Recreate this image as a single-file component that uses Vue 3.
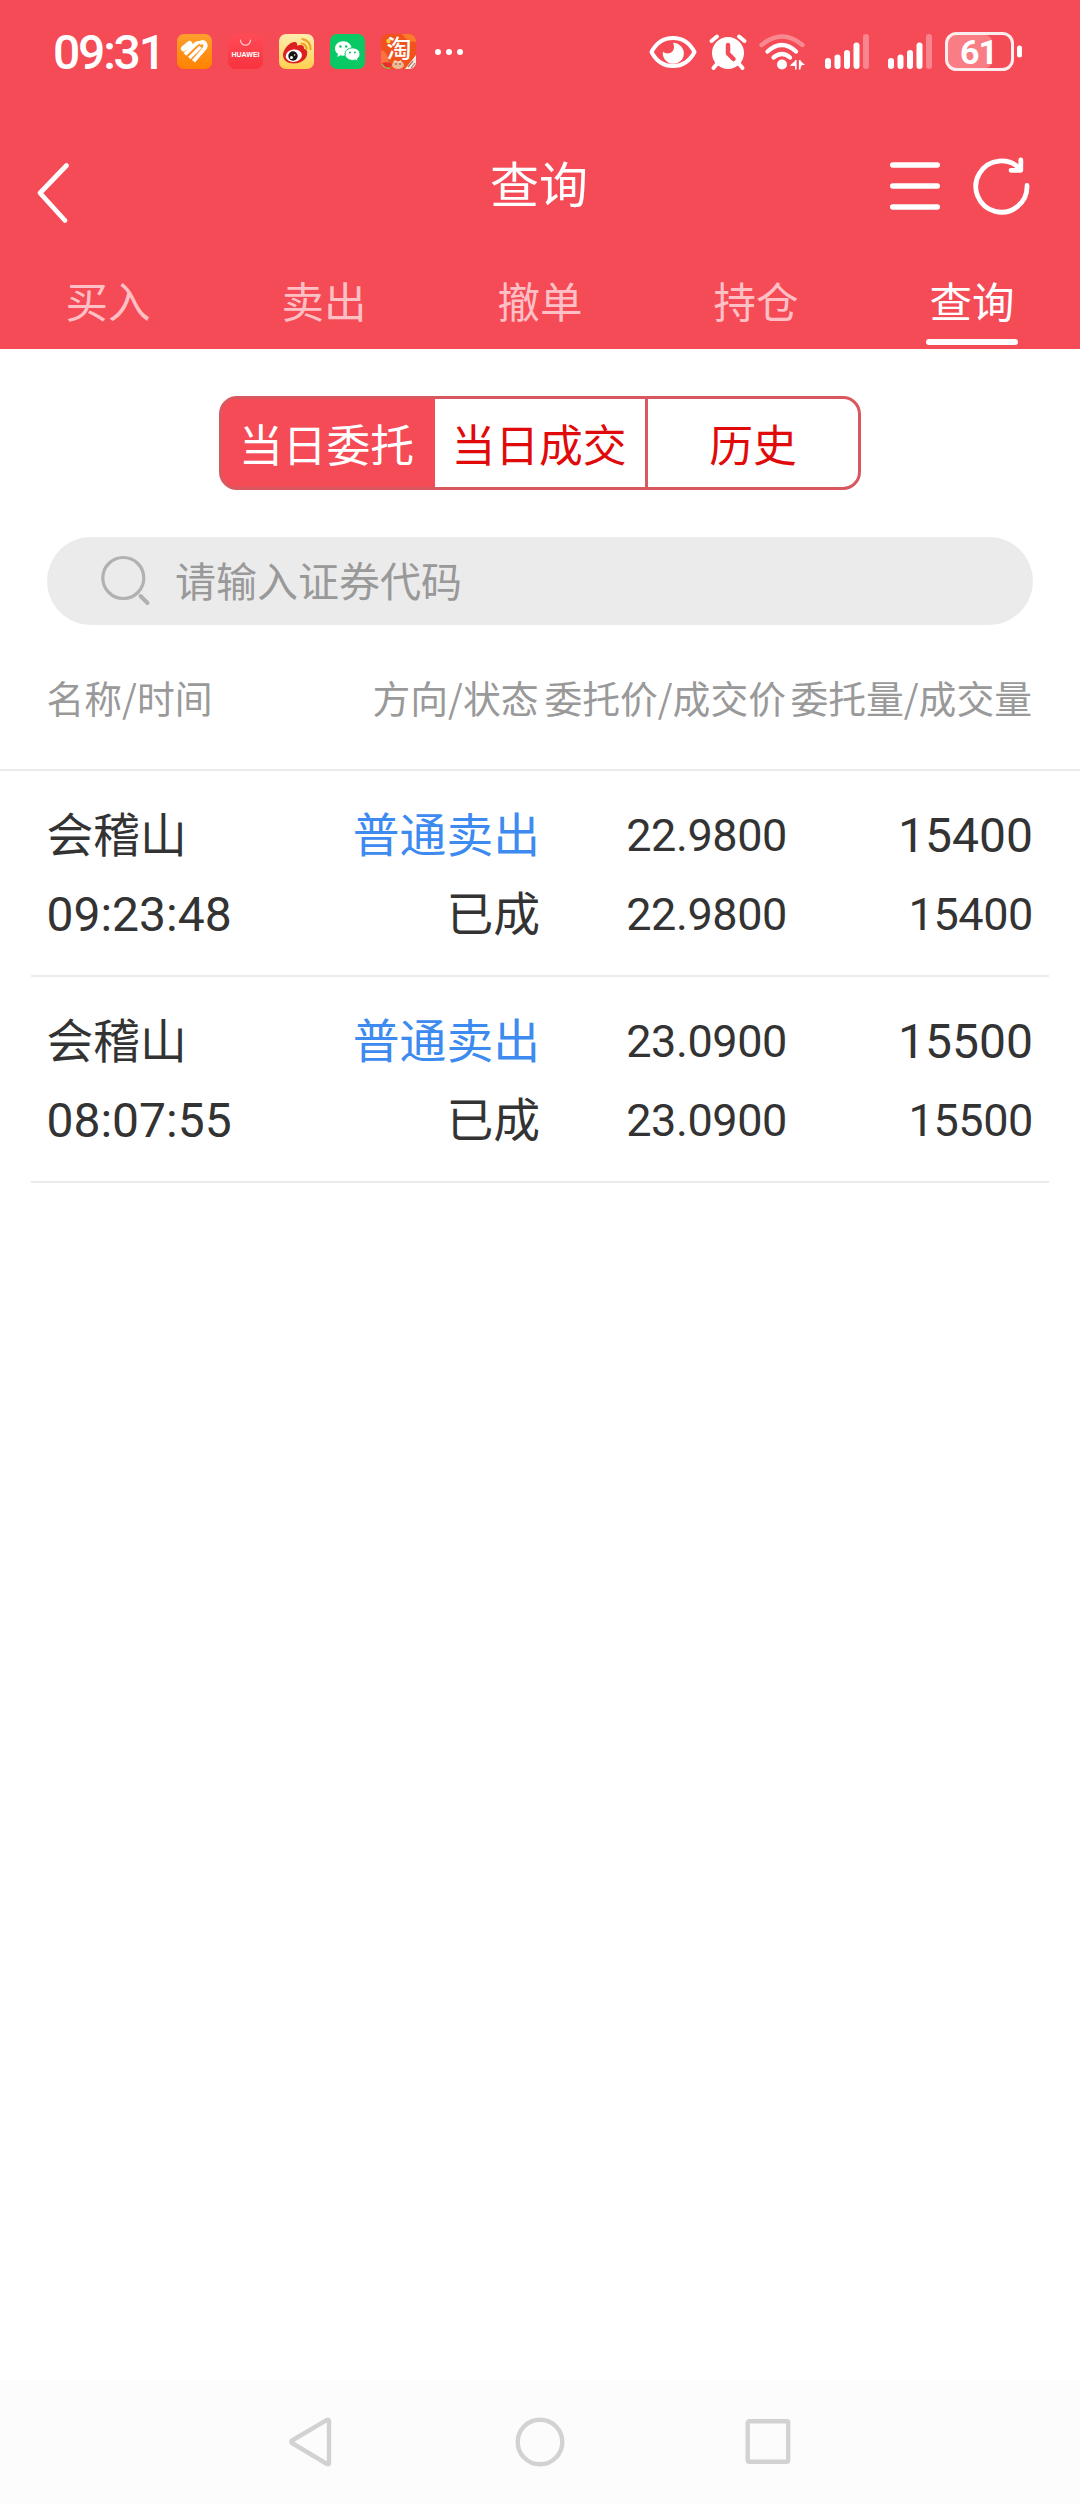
<script setup>
import { ref } from 'vue'

const tabs = ['买入', '卖出', '撤单', '持仓', '查询']
const activeTab = ref(4)

const segments = ['当日委托', '当日成交', '历史']
const activeSegment = ref(0)

const columns = ['名称/时间', '方向/状态', '委托价/成交价', '委托量/成交量']

const orders = [
  { name: '会稽山', time: '09:23:48', side: '普通卖出', status: '已成', price: '22.9800', dealPrice: '22.9800', qty: '15400', dealQty: '15400' },
  { name: '会稽山', time: '08:07:55', side: '普通卖出', status: '已成', price: '23.0900', dealPrice: '23.0900', qty: '15500', dealQty: '15500' },
]

const bars = [
  { x: 0, y: 24, h: 11 },
  { x: 9.5, y: 20.5, h: 14.5 },
  { x: 19, y: 16, h: 19 },
  { x: 28.5, y: 8.5, h: 26.5 },
]
</script>

<template>
  <div class="screen">
    <header class="top">
      <div class="status">
        <span class="clock">09:31</span>
        <div class="apps">
          <svg width="35" height="35" viewBox="0 0 35 35">
            <defs>
              <linearGradient id="og" x1="0" y1="0" x2="0" y2="1"><stop offset="0" stop-color="#ff9f2e" /><stop offset="1" stop-color="#ff8200" /></linearGradient>
            </defs>
            <rect width="35" height="35" rx="7" fill="url(#og)" />
            <g fill="none" stroke="#fff">
              <path d="M7 14.500 12.500 10" stroke-width="6" stroke-linecap="round" />
              <path d="M8 20.500 18.500 10.200Q21 8 22.500 9.500" stroke-width="3.800" />
              <path d="M12.300 24 23.500 12.800" stroke-width="3.200" />
              <path d="M22.500 9.300Q26 6.800 28 9.500 29.500 12.500 27 15L16.500 27.300" stroke-width="4" />
            </g>
          </svg>
          <svg width="35" height="35" viewBox="0 0 35 35">
            <defs>
              <linearGradient id="hw" x1="0" y1="0" x2="0" y2="1"><stop offset="0" stop-color="#ff4b57" /><stop offset="1" stop-color="#f8333f" /></linearGradient>
            </defs>
            <rect width="35" height="35" rx="7" fill="url(#hw)" />
            <path d="M12.500 6.200a5 5 0 0 0 10 0" fill="none" stroke="#ffc4c8" stroke-width="1.300" stroke-linecap="round" />
            <text x="17.500" y="22.600" text-anchor="middle" class="brand" textLength="28" lengthAdjust="spacingAndGlyphs">HUAWEI</text>
          </svg>
          <svg width="35" height="35" viewBox="0 0 35 35">
            <defs>
              <linearGradient id="wb" x1="0" y1="0" x2="0" y2="1"><stop offset="0" stop-color="#ffecb0" /><stop offset="1" stop-color="#ffd04f" /></linearGradient>
            </defs>
            <rect width="35" height="35" rx="7" fill="url(#wb)" />
            <path d="M4 21C4 16 10 8.500 15 8c3-.3 3.500 2 3 3.800 3-1.300 7.500-1.300 7 3 3.500 1 3.500 3.500 3 6C27 26.500 20.500 29.500 15 29.500 8.500 29.500 4 26 4 21Z" fill="#dd1f22" />
            <ellipse cx="14.800" cy="21.700" rx="8.200" ry="6.200" fill="#fff" transform="rotate(-8 14.800 21.700)" />
            <circle cx="14" cy="22" r="4.700" fill="#161616" />
            <circle cx="12.500" cy="23.500" r="1.500" fill="#fff" />
            <circle cx="15.600" cy="21" r=".8" fill="#fff" />
            <path d="M22.500 9.500a5 5 0 0 1 5 5.500M23.500 5.200a9 9 0 0 1 8 10" fill="none" stroke="#f3a11c" stroke-width="2.200" stroke-linecap="round" />
          </svg>
          <svg width="35" height="35" viewBox="0 0 35 35">
            <rect width="35" height="35" rx="7" fill="#08c963" />
            <path d="M13.300 7.200c-4.700 0-8.300 3.200-8.300 7.300 0 2.300 1.200 4.300 3 5.600L7.300 23l3.300-1.700c.9.200 1.800.4 2.700.4 4.700 0 8.300-3.200 8.300-7.200s-3.600-7.300-8.300-7.300Z" fill="#fff" />
            <path d="M22.500 13.900c4.300 0 7.500 2.700 7.500 6.200 0 2-1 3.700-2.600 4.800l.6 2.600-2.900-1.500c-.8.200-1.700.4-2.600.4-4.300 0-7.500-2.800-7.500-6.300s3.200-6.200 7.500-6.200Z" fill="#fff" stroke="#08c963" stroke-width="1" />
            <g fill="#08c963"><circle cx="10.400" cy="12.500" r="1.200" /><circle cx="16.200" cy="12.500" r="1.200" /><circle cx="20" cy="18.400" r="1" /><circle cx="25" cy="18.400" r="1" /></g>
          </svg>
          <svg width="35" height="35" viewBox="0 0 35 35">
            <defs><clipPath id="tb"><rect width="35" height="35" rx="7" /></clipPath></defs>
            <g clip-path="url(#tb)">
              <rect width="35" height="35" fill="#f0511d" />
              <path d="M21 0h14v8q-8 1-14-8Z" fill="#fb7b2c" />
              <path d="M0 16q7 2 8 13l-8 2Z" fill="#fb7440" />
              <circle cx="7.500" cy="7" r="2.200" fill="#ffcf3c" />
              <path d="M24 35 35 21v14Z" fill="#fbe9e1" />
              <path d="M27 33l5-6M30 34l4-5" stroke="#a77b6c" stroke-width="1.200" />
              <path d="M1 29q5-2 10 1-2 5-7 4.500Z" fill="#e72d31" /><path d="M1 30q2 5 8 4" fill="none" stroke="#8fbf4c" stroke-width="1.500" />
              <ellipse cx="17" cy="31" rx="6" ry="4" fill="#edb993" />
              <path d="M12 28l2-2 3 2 3-2 1 3" fill="#f4d5b5" /><circle cx="15" cy="30" r=".8" fill="#70402e" /><circle cx="19" cy="30" r=".8" fill="#70402e" />
            </g>
            <text x="18" y="23.500" text-anchor="middle" class="tao">淘</text>
          </svg>
        </div>
        <svg class="dots" width="28" height="8" viewBox="0 0 28 8" fill="#fff"><circle cx="3" cy="4" r="3" /><circle cx="14" cy="4" r="3" /><circle cx="25" cy="4" r="3" /></svg>

        <svg class="eye" width="48" height="36" viewBox="0 0 48 36">
          <path d="M2.500 18C7.500 8.500 15.500 4 24 4s16.500 4.500 21.500 14C40.500 27.500 32.500 32 24 32S7.500 27.500 2.500 18Z" fill="none" stroke="#fff" stroke-width="4" stroke-linejoin="round" />
          <path d="M24 8.800A10.500 10.500 0 1 1 14 17.500c1 1.300 2.600 2 4.500 2 3.600 0 6.500-2.800 6.500-6.200 0-1.700-.3-3.300-1-4.500Z" fill="#fff" />
        </svg>
        <svg class="alarm" width="38" height="36" viewBox="0 0 38 36">
          <circle cx="19" cy="19" r="16" fill="#fff" />
          <path d="M2.500 7 8 2.500M30 2.500 35.500 7M4.500 34l5-6M33.500 34l-5-6" stroke="#fff" stroke-width="4" stroke-linecap="round" />
          <path d="M19 11v8.500l5.500 5.500" fill="none" stroke="#f54b57" stroke-width="4.500" stroke-linecap="round" stroke-linejoin="round" />
        </svg>
        <svg class="wifi" width="46" height="36" viewBox="0 0 46 36">
          <g fill="none" stroke="#fff" stroke-width="4.300" stroke-linecap="round">
            <path d="M2.500 11Q23-6 43.500 11" opacity=".35" />
            <path d="M8.500 17.500Q23 4.500 37 17.500" />
            <path d="M14.500 23.500Q23 16.500 31 23.500" />
          </g>
          <circle cx="23" cy="30.500" r="5" fill="#fff" />
          <path d="M31.500 31 37 26v9.500V32h-5.500ZM40.500 26l5.500 5h-3l-2.500 4.500Z" fill="#fff" />
          <path d="M36.800 26v9.500M40.700 26v9.500" stroke="#fff" stroke-width="1.600" />
        </svg>
        <svg v-for="n in 2" :key="n" class="signal" width="44" height="35" viewBox="0 0 44 35" fill="#fff">
          <rect v-for="b in bars" :key="b.x" :x="b.x" :y="b.y" width="6" :height="b.h" rx="3" />
          <rect x="38" y="0" width="6" height="35" rx="3" opacity=".32" />
        </svg>
        <svg class="battery" width="77" height="39" viewBox="0 0 77 39">
          <rect x="3" y="3" width="44" height="33" rx="7" fill="#fff" opacity=".28" />
          <rect x="1.500" y="1.500" width="66" height="36" rx="10" fill="none" stroke="#fff" stroke-opacity=".9" stroke-width="3" />
          <rect x="72" y="13.500" width="5" height="12" rx="2.500" fill="#fff" />
          <text x="33.500" y="31.500" text-anchor="middle" class="level">61</text>
        </svg>
      </div>

      <div class="titlebar">
        <svg class="back" width="34" height="62" viewBox="0 0 34 62"><path d="M30.500 3.500 4 31 29 58.500" fill="none" stroke="#fff" stroke-width="4.800" stroke-linecap="round" stroke-linejoin="round" /></svg>
        <h1>查询</h1>
        <div class="actions">
          <svg width="50" height="60" viewBox="0 0 50 60"><path d="M2.800 9H47.200M2.800 30H47.200M2.800 51H47.200" stroke="#fff" stroke-width="5.600" stroke-linecap="round" /></svg>
          <svg width="60" height="60" viewBox="0 0 60 60" fill="none" stroke="#fff" stroke-width="4.800" stroke-linecap="round" stroke-linejoin="round">
            <path d="M55 29.500A25.600 25.600 0 1 1 48.500 13.500" />
            <path d="M48.800 4V14.300H39" />
          </svg>
        </div>
      </div>

      <nav class="tabs">
        <button v-for="(t, i) in tabs" :key="t" :class="{ on: i === activeTab }" @click="activeTab = i"><span>{{ t }}</span></button>
      </nav>
    </header>

    <main>
      <div class="segmented">
        <button v-for="(s, i) in segments" :key="s" :class="{ on: i === activeSegment }" @click="activeSegment = i"><span>{{ s }}</span></button>
      </div>

      <div class="search">
        <svg width="52" height="52" viewBox="0 0 52 52" fill="none" stroke="#b1b1b1" stroke-width="3.200"><circle cx="23.300" cy="23" r="20.500" /><path d="M40.500 41 47.500 48" stroke-width="4" stroke-linecap="round" /></svg>
        <span>请输入证券代码</span>
      </div>

      <div class="grid thead"><span v-for="c in columns" :key="c">{{ c }}</span></div>

      <section v-for="o in orders" :key="o.time" class="order">
        <div class="grid line">
          <span class="cjk">{{ o.name }}</span>
          <span class="cjk side">{{ o.side }}</span>
          <span class="num">{{ o.price }}</span>
          <span class="num big">{{ o.qty }}</span>
        </div>
        <div class="grid line">
          <span class="num big">{{ o.time }}</span>
          <span class="cjk">{{ o.status }}</span>
          <span class="num">{{ o.dealPrice }}</span>
          <span class="num">{{ o.dealQty }}</span>
        </div>
      </section>
    </main>

    <footer class="sysnav">
      <svg width="46" height="50" viewBox="0 0 46 50"><path d="M41 3.500V46.500Q40.500 47.500 39 47L4 26Q2.500 25 4 23.500L39 2.800Q40.500 2.300 41 3.500Z" /></svg>
      <svg width="50" height="50" viewBox="0 0 50 50"><circle cx="25" cy="25" r="22.300" /></svg>
      <svg width="46" height="50" viewBox="0 0 46 50"><rect x="2.700" y="4.300" width="40.500" height="40.500" rx="1.500" /></svg>
    </footer>
  </div>
</template>

<style>
body { margin: 0; background: #fff; }
</style>

<style scoped>
.screen {
  width: 1080px;
  height: 2504px;
  display: flex;
  flex-direction: column;
  background: #fff;
  color: #333;
  font-family: "Noto Sans CJK SC", sans-serif;
}
svg { display: block; flex: none; overflow: visible; }
button { border: 0; padding: 0; margin: 0; background: none; font: inherit; color: inherit; }

.top { height: 349px; flex: none; background: #f54b57; color: #fff; display: flex; flex-direction: column; }
.status { height: 103px; display: flex; align-items: center; padding-left: 53px; }
.clock { width: 124px; font: 500 48px/56px Roboto, sans-serif; letter-spacing: -2.200px; margin-top: 3px; }
.apps { display: flex; gap: 16px; }
.dots { margin-left: 19px; }
.brand { font: 700 6.500px "Liberation Sans", sans-serif; fill: #fff; }
.tao { font: 500 25px "Noto Sans CJK SC", sans-serif; fill: #fff; }
.eye { margin-left: 186px; }
.alarm { margin-left: 12px; }
.wifi { margin-left: 12px; }
.signal { margin-left: 19.500px; }
.battery { margin-left: 13px; }
.level { font: 700 34px Roboto, sans-serif; letter-spacing: -1px; fill: #fff; }

.titlebar { height: 154px; display: grid; grid-template-columns: 1fr auto 1fr; align-items: start; padding: 53px 48px 0 36px; box-sizing: border-box; }
.back { margin-top: 6px; }
h1 { margin: 1px -11px 0 -1px; font-size: 49px; font-weight: 400; line-height: 50px; }
.actions { display: flex; gap: 32px; justify-self: end; }

.tabs { flex: 1; display: flex; }
.tabs button { flex: 1; display: flex; justify-content: center; align-items: flex-start; color: #ffc0c5; font-size: 42.500px; line-height: 60px; }
.tabs span { height: 76px; padding: 0 3.500px; margin-top: 13px; position: relative; }
.tabs .on { color: #fff; }
.tabs .on span::after { content: ""; position: absolute; left: 0; right: 0; top: 69px; height: 6px; border-radius: 3px; background: #fff; }

main { flex: 1; display: flex; flex-direction: column; }
.segmented { width: 642px; height: 94px; box-sizing: border-box; margin: 47px 0 0 219px; display: grid; grid-template-columns: 213px 213px 210px; border: 3px solid #d9575f; border-radius: 18px; overflow: hidden; background: #f54b57; }
.segmented button { display: flex; align-items: center; justify-content: center; background: #fff; color: #e00a0a; font-size: 43.800px; line-height: 60px; box-sizing: border-box; }
.segmented button:nth-child(2) { border-right: 3px solid #d9575f; padding-right: 2px; }
.segmented .on { background: #f54b57; color: #fff; padding-right: 4px; }
.segmented span { margin-top: -1px; }

.search { width: 986px; height: 88px; box-sizing: border-box; margin: 47px 0 0 47px; padding-left: 53px; border-radius: 44px; background: #ebebeb; display: flex; align-items: center; color: #999; font-size: 41px; line-height: 60px; }
.search svg { margin-top: -1px; }
.search span { margin: -5px 0 0 23px; }

.grid { display: grid; grid-template-columns: repeat(4, 246px); padding: 0 48px; }
.grid > span { white-space: nowrap; text-align: right; }
.grid > span:first-child { text-align: left; margin-left: -1.500px; }
.thead { height: 146px; box-sizing: border-box; padding-top: 42px; border-bottom: 2px solid #ebebeb; color: #999; font-size: 37.800px; line-height: 60px; }
.thead > span:nth-child(2) { margin-right: 1.500px; }

.order { height: 206px; box-sizing: border-box; margin: 0 31px; padding-top: 21px; border-bottom: 2px solid #ebebeb; }
.order .grid { padding: 0 17px; }
.line { height: 79px; }
.line > span { height: 79px; box-sizing: border-box; }
.cjk { font-size: 46.800px; line-height: 79px; }
.side { color: #3d8af0; }
.line > .num { font: 400 45px/79px Roboto, sans-serif; letter-spacing: -.4px; padding-top: 4px; margin-right: -1px; }
.line > .big { font-size: 48px; letter-spacing: 0; }

.sysnav { height: 124px; flex: none; display: flex; justify-content: space-between; background: #fcfcfc; padding: 37px 289px 0 288px; box-sizing: border-box; }
.sysnav svg { fill: none; stroke: #d2d2d2; stroke-width: 4.400; stroke-linejoin: round; }
</style>
